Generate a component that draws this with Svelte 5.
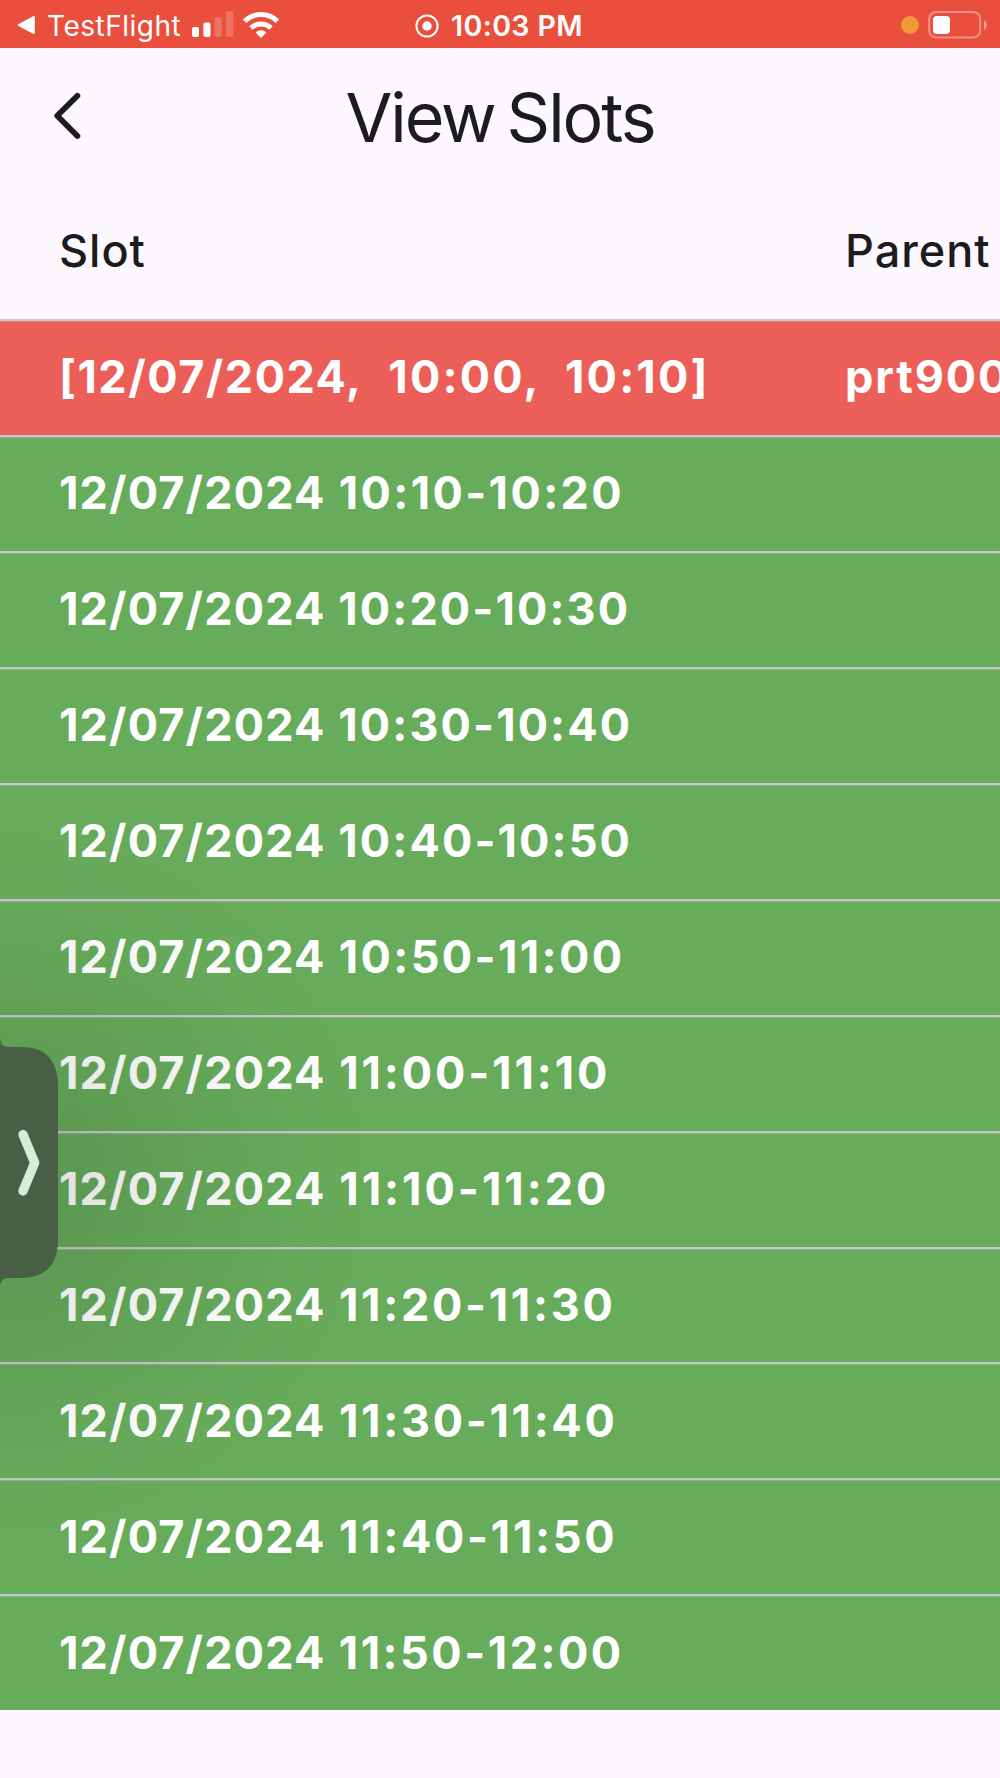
<script lang="ts">
	interface Slot {
		date: string;
		time: string;
		parent?: string;
		booked?: boolean;
		tracking: number;
	}

	// tracking — letter-spacing of the time part in px
	const slots: Slot[] = [
		{ date: '[12/07/2024,', time: '  10:00,  10:10]', parent: 'prt900', booked: true, tracking: 2.2 },
		{ date: '12/07/2024', time: ' 10:10-10:20', tracking: 2.4 },
		{ date: '12/07/2024', time: ' 10:20-10:30', tracking: 2.1 },
		{ date: '12/07/2024', time: ' 10:30-10:40', tracking: 2.1 },
		{ date: '12/07/2024', time: ' 10:40-10:50', tracking: 2.1 },
		{ date: '12/07/2024', time: ' 10:50-11:00', tracking: 2.4 },
		{ date: '12/07/2024', time: ' 11:00-11:10', tracking: 2.9 },
		{ date: '12/07/2024', time: ' 11:10-11:20', tracking: 3 },
		{ date: '12/07/2024', time: ' 11:20-11:30', tracking: 2.7 },
		{ date: '12/07/2024', time: ' 11:30-11:40', tracking: 2.7 },
		{ date: '12/07/2024', time: ' 11:40-11:50', tracking: 2.7 },
		{ date: '12/07/2024', time: ' 11:50-12:00', tracking: 2.5 }
	];
</script>

<div class="screen">
	<div class="status">
		<div class="status__left">
			<svg width="19" height="20" viewBox="0 0 19 20">
				<path d="M1.5 10 L17 1.8 V18.2 Z" fill="#fff" stroke="#fff" stroke-width="1.6" stroke-linejoin="round" />
			</svg>
			<span class="status__app">TestFlight</span>
			<svg class="status__signal" width="42" height="28" viewBox="0 0 42 28" fill="#fff">
				<rect x="0" y="16" width="7" height="10" rx="2" />
				<rect x="11.3" y="11.6" width="7.2" height="14.4" rx="2" />
				<rect x="22.6" y="6" width="7.2" height="20" rx="2" opacity="0.2" />
				<rect x="34" y="0" width="7.4" height="26" rx="2" opacity="0.2" />
			</svg>
			<svg width="38" height="28" viewBox="0 0 38 28" fill="none" stroke="#fff" stroke-width="5">
				<path d="M2.6 10.2 A23.5 23.5 0 0 1 35.4 10.2" />
				<path d="M9 17 A14.3 14.3 0 0 1 29 17" />
				<path d="M13.6 21.4 A8 8 0 0 1 24.4 21.4 L19 27 Z" fill="#fff" stroke="none" />
			</svg>
		</div>
		<div class="status__time">
			<svg width="24" height="24" viewBox="0 0 24 24">
				<circle cx="12" cy="12" r="10.6" fill="none" stroke="#fff" stroke-width="2" />
				<circle cx="12" cy="12" r="4.7" fill="#fff" />
			</svg>
			<span>10:03 PM</span>
		</div>
		<div class="status__right">
			<span class="status__dot"></span>
			<svg width="60" height="28" viewBox="0 0 60 28">
				<rect x="1.2" y="1" width="51" height="25.4" rx="7" fill="none" stroke="#fff" stroke-opacity="0.38" stroke-width="2" />
				<rect x="5" y="5" width="17" height="18" rx="4" fill="#fff" />
				<path d="M56 9 Q59 11 59 14 Q59 17 56 19 Z" fill="#fff" fill-opacity="0.45" />
			</svg>
		</div>
	</div>

	<header class="appbar">
		<svg class="appbar__back" width="28" height="48" viewBox="0 0 28 48">
			<path d="M23.4 3.8 L3.2 23.8 L23.4 44" fill="none" stroke="#1c1b1f" stroke-width="5.8" stroke-linecap="round" stroke-linejoin="round" />
		</svg>
		<h1>View Slots</h1>
	</header>

	<div class="table">
		<div class="row row--head">
			<div class="cell cell--slot">Slot</div>
			<div class="cell cell--parent">Parent</div>
		</div>
		{#each slots as slot (slot.time)}
			<div class="row" class:row--booked={slot.booked}>
				<div class="cell cell--slot">
					<span class="date">{slot.date}</span><span style:letter-spacing="{slot.tracking}px">{slot.time}</span>
				</div>
				<div class="cell cell--parent">{slot.parent ?? ''}</div>
			</div>
		{/each}
	</div>

	<div class="shade"></div>
	<svg class="handle" width="60" height="248" viewBox="0 0 60 248">
		<path d="M0 0 Q1 8 8 8 H22 C46 8 58 22 58 48 V200 C58 226 46 238 22 239 H8 Q1 239 0 247 Z" fill="#485f45" />
		<path d="M23 95.5 L34.7 123.7 L23 152" fill="none" stroke="#d4edd9" stroke-width="9.4" stroke-linecap="round" stroke-linejoin="round" />
	</svg>
</div>

<style>
	:global(body) {
		margin: 0;
		background: #fcf8fe;
	}
	.screen {
		position: relative;
		width: 1000px;
		height: 1778px;
		overflow: hidden;
		background: #fcf8fe;
		color: #1c1b1f;
		font-family: Inter, 'Liberation Sans', sans-serif;
	}
	.status {
		display: grid;
		grid-template-columns: 415px 1fr 120px;
		align-items: center;
		height: 48px;
		background: #ea4f3d;
		color: #fff;
		font-size: 28px;
		line-height: 48px;
		white-space: nowrap;
	}
	.status__left,
	.status__time,
	.status__right {
		display: flex;
		align-items: center;
	}
	.status__left {
		padding-left: 17px;
	}
	.status__app {
		width: 132px;
		margin: 2px 13px 0 11px;
		letter-spacing: 0.5px;
	}
	.status__signal {
		margin-right: 8px;
	}
	.status__time {
		gap: 12px;
		padding-top: 2px;
		font-size: 28.5px;
		font-weight: 600;
		letter-spacing: 0.4px;
	}
	.status__right {
		gap: 9px;
		padding-left: 21px;
	}
	.status__dot {
		width: 18px;
		height: 18px;
		border-radius: 50%;
		background: #f09a37;
	}
	.appbar {
		display: grid;
		grid-template-columns: 54px 1fr 54px;
		align-items: center;
		height: 136px;
	}
	.appbar__back {
		margin-left: 54px;
	}
	h1 {
		margin: 1px 0 0;
		text-align: center;
		font-size: 68px;
		font-weight: 400;
		letter-spacing: -2.1px;
		word-spacing: -5px;
	}
	.row {
		display: flex;
		align-items: center;
		box-sizing: border-box;
		height: 115.94px;
		padding: 0 0 2px 59px;
		border-top: 2px solid #c9c5d0;
		box-shadow: inset 0 1px rgba(201, 197, 208, 0.35);
		background: #67ac5b;
		color: #fff;
		font-size: 45px;
		font-weight: 700;
		white-space: nowrap;
	}
	.row--booked {
		background: #eb5f58;
	}
	.row--head {
		height: 135px;
		border-top: 0;
		box-shadow: none;
		background: none;
		color: #1c1b1f;
		font-weight: 500;
		letter-spacing: 1px;
	}
	.cell--slot {
		flex: 0 0 786px;
	}
	.cell--slot span {
		white-space: pre;
	}
	.row--booked .cell--parent {
		letter-spacing: 1.9px;
	}
	.date {
		letter-spacing: 1.15px;
	}
	.row--booked .date {
		letter-spacing: 1.5px;
	}
	.shade {
		position: absolute;
		left: 0;
		top: 780px;
		width: 420px;
		height: 800px;
		background: radial-gradient(ellipse 100% 50% at 0 50%, rgba(0, 0, 0, 0.14), rgba(0, 0, 0, 0.075) 35%, rgba(0, 0, 0, 0.02) 72%, transparent);
	}
	.handle {
		position: absolute;
		left: 0;
		top: 1039px;
	}
</style>
